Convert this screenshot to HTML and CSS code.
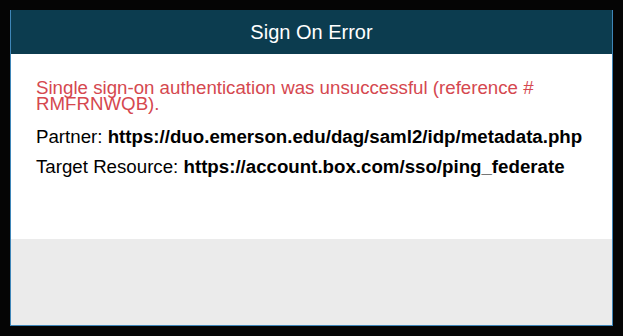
FILE: index.html
```html
<!DOCTYPE html>
<html>
<head>
<meta charset="utf-8">
<link rel="stylesheet" href="styles.css">
</head>
<body>
<div class="dialog">
  <div class="dialog-header">Sign On Error</div>
  <div class="dialog-body">
    <div class="error-msg">Single sign-on authentication was unsuccessful (reference # RMFRNWQB).</div>
    <div class="detail">Partner: <b>https://duo.emerson.edu/dag/saml2/idp/metadata.php</b></div>
    <div class="detail">Target Resource: <b>https://account.box.com/sso/ping_federate</b></div>
  </div>
  <div class="dialog-footer"></div>
</div>
</body>
</html>
```
FILE: styles.css
```css
html, body {
  margin: 0;
  padding: 0;
  background: #050505;
  font-family: "Liberation Sans", Arial, sans-serif;
}
body {
  padding: 10px 0 0 10px;
}
.dialog {
  width: 601px;
  height: 315px;
  border: 1px solid #3f86b8;
  border-top: 0;
  display: flex;
  flex-direction: column;
  background: #ebebeb;
}
.dialog-header {
  height: 44px;
  background: #0c3c4f;
  color: #fff;
  font-size: 20px;
  display: flex;
  align-items: center;
  justify-content: center;
}
.dialog-body {
  background: #fff;
  height: 185px;
  padding: 26px 25px 0;
  box-sizing: border-box;
}
.error-msg {
  color: #d5484f;
  font-size: 18.7px;
  line-height: 16px;
  margin-bottom: 15px;
}
.detail {
  font-size: 18.7px;
  line-height: 20px;
  margin-bottom: 10px;
  color: #000;
}
.detail b {
  font-weight: bold;
}
```
